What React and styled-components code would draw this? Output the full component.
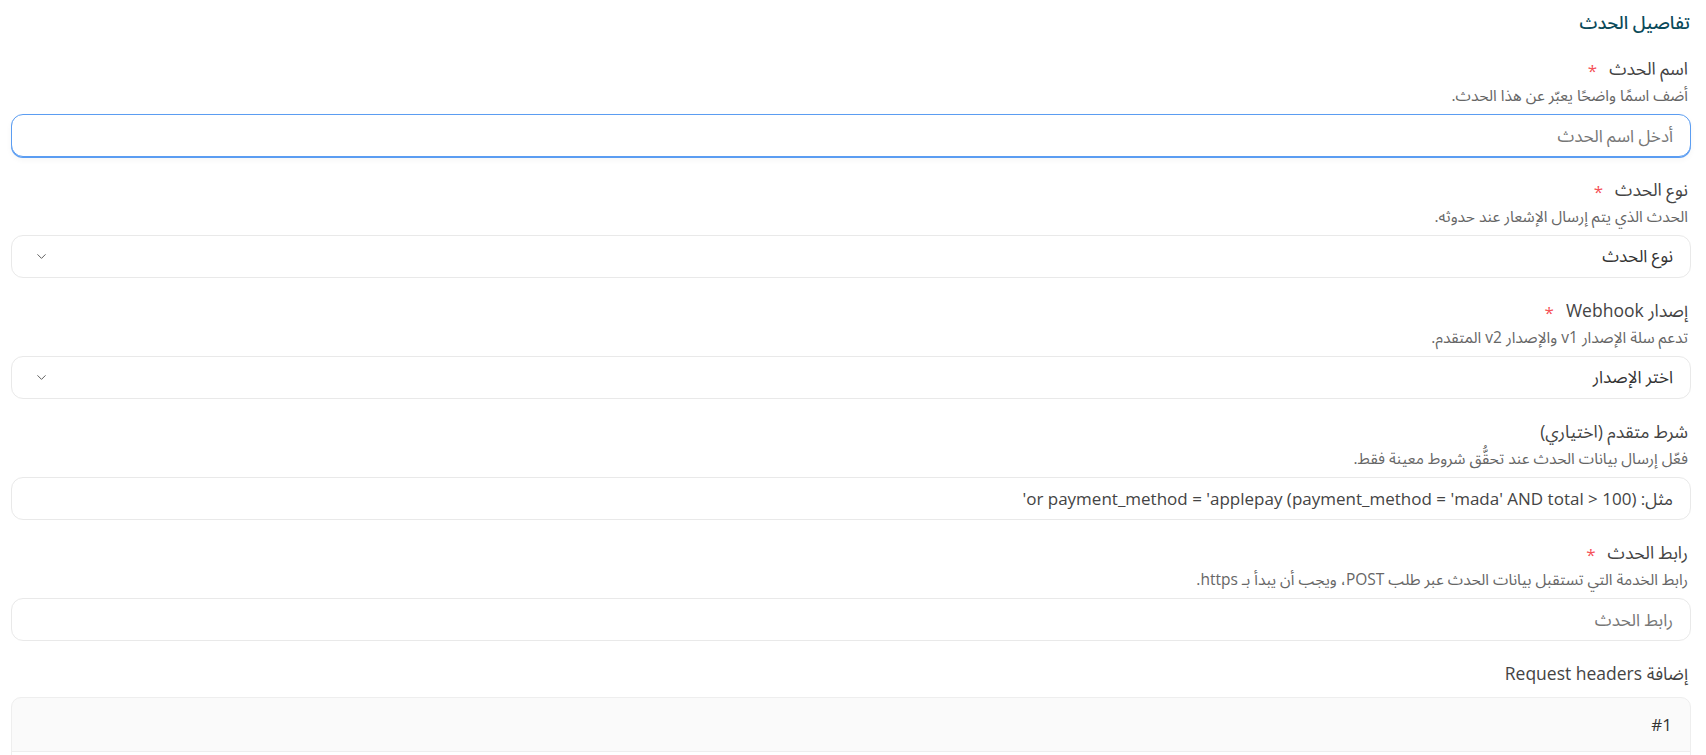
import React from 'react';
import styled, { createGlobalStyle, css } from 'styled-components';
import { ChevronDown } from 'lucide-react';

const Global = createGlobalStyle`
  html, body { margin: 0; padding: 0; background: #ffffff; }
  body { font-family: "Open Sans", "Noto Sans Arabic", "DejaVu Sans", sans-serif; color: #333; }
  * { box-sizing: border-box; }
`;

const Page = styled.div`
  direction: rtl;
  padding: 10px 15px 40px 11px;
  display: flex;
  flex-direction: column;
`;

const SectionTitle = styled.h2`
  margin: 0 1px 21px 0;
  font-size: 18px;
  line-height: 24px;
  font-weight: 500;
  color: #0a4a5a;
`;

const Form = styled.div`
  display: flex;
  flex-direction: column;
  gap: 19px;
`;

const Field = styled.div`
  display: flex;
  flex-direction: column;
`;

const LabelRow = styled.div`
  display: flex;
  align-items: center;
  gap: 12px;
  padding-right: 3px;
  height: 26px;
`;

const LabelText = styled.label`
  font-size: 17.5px;
  line-height: 26px;
  font-weight: 400;
  color: #444;
`;

const Star = styled.span`
  color: #f55157;
  font-size: 17px;
  line-height: 1;
  padding-top: 4px;
`;

const Hint = styled.p`
  margin: 3px 3px 0 0;
  font-size: 15.5px;
  line-height: 22px;
  color: #666;
`;

const Control = styled.div`
  margin-top: 8px;
  height: 43px;
  border-radius: 12px;
  border: 1px solid #e9e9e9;
  background: #fff;
  display: flex;
  align-items: center;
  padding: 0 17px 0 22px;
  ${p => p.$focused && css`
    border-color: #5b9df2;
    box-shadow: 0 1px 0 #5b9df2, 0 3px 6px rgba(0, 0, 0, 0.04);
  `}
`;

const TextInput = styled.input`
  flex: 1;
  border: 0;
  outline: none;
  background: transparent;
  direction: rtl;
  font-family: inherit;
  font-size: 17px;
  color: #333;
  padding: 0;
  caret-color: #222;
  &::placeholder { color: ${p => p.$dark ? '#444' : '#777'}; opacity: 1; }
`;

const SelectValue = styled.span`
  flex: 1;
  font-size: 17px;
  color: #333;
`;

const Chevron = styled(ChevronDown)`
  color: #555;
  flex: none;
`;

const HeadersBox = styled.div`
  margin-top: 11px;
  border: 1px solid #eeeeee;
  border-radius: 10px 10px 0 0;
  background: #fafafa;
  display: flex;
  flex-direction: column;
`;

const HeaderRow = styled.div`
  height: 54px;
  display: flex;
  align-items: center;
  padding: 0 18px;
  font-size: 17px;
  color: #333;
  border-bottom: 1px solid #eeeeee;
`;

const HeaderBody = styled.div`
  height: 90px;
  background: #fff;
`;

function FieldBlock({ label, required, hint, children }) {
  return (
    <Field>
      <LabelRow>
        <LabelText>{label}</LabelText>
        {required && <Star>*</Star>}
      </LabelRow>
      {hint && <Hint>{hint}</Hint>}
      {children}
    </Field>
  );
}

export default function App() {
  return (
    <>
      <Global />
      <Page>
        <SectionTitle>تفاصيل الحدث</SectionTitle>
        <Form>
          <FieldBlock label="اسم الحدث" required hint="أضف اسمًا واضحًا يعبّر عن هذا الحدث.">
            <Control $focused>
              <TextInput autoFocus placeholder="أدخل اسم الحدث" />
            </Control>
          </FieldBlock>
          <FieldBlock label="نوع الحدث" required hint="الحدث الذي يتم إرسال الإشعار عند حدوثه.">
            <Control>
              <SelectValue>نوع الحدث</SelectValue>
              <Chevron size={15} strokeWidth={1.5} />
            </Control>
          </FieldBlock>
          <FieldBlock label="إصدار Webhook" required hint="تدعم سلة الإصدار v1 والإصدار v2 المتقدم.">
            <Control>
              <SelectValue>اختر الإصدار</SelectValue>
              <Chevron size={15} strokeWidth={1.5} />
            </Control>
          </FieldBlock>
          <FieldBlock label="شرط متقدم (اختياري)" hint="فعّل إرسال بيانات الحدث عند تحقُّق شروط معينة فقط.">
            <Control>
              <TextInput $dark placeholder="مثل: (payment_method = 'mada' AND total > 100) or payment_method = 'applepay'" />
            </Control>
          </FieldBlock>
          <FieldBlock label="رابط الحدث" required hint="رابط الخدمة التي تستقبل بيانات الحدث عبر طلب POST، ويجب أن يبدأ بـ https.">
            <Control>
              <TextInput placeholder="رابط الحدث" />
            </Control>
          </FieldBlock>
          <FieldBlock label="إضافة Request headers">
            <HeadersBox>
              <HeaderRow>#1</HeaderRow>
              <HeaderBody />
            </HeadersBox>
          </FieldBlock>
        </Form>
      </Page>
    </>
  );
}
